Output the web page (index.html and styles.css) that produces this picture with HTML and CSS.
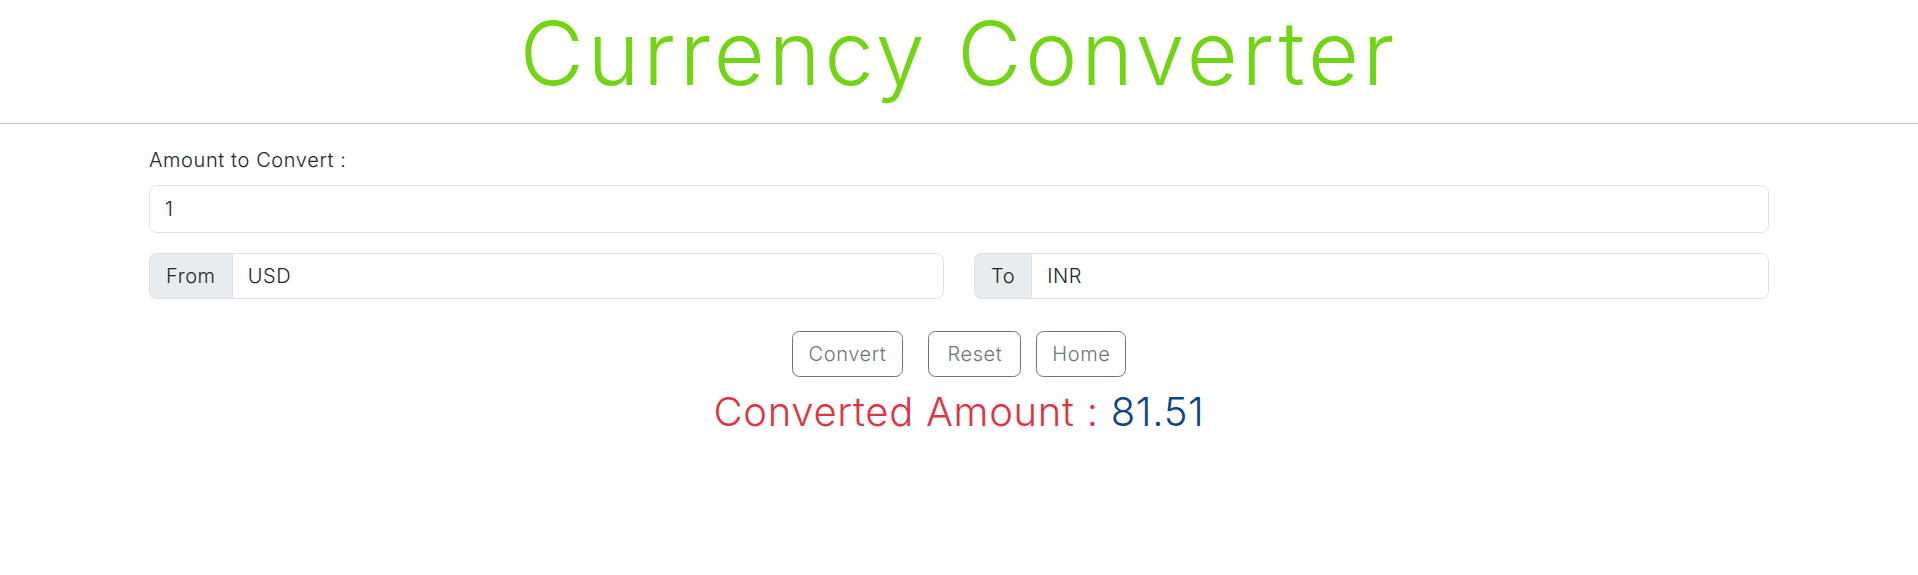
FILE: index.html
```html
<!DOCTYPE html>
<html lang="en">
<head>
<meta charset="utf-8">
<title>Currency Converter</title>
<link rel="stylesheet" href="styles.css">
</head>
<body>
<header class="header">
  <h1 class="title">Currency Converter</h1>
</header>
<hr class="divider">
<main class="container">
  <label class="label" for="amount">Amount to Convert :</label>
  <input class="field" id="amount" type="text" value="1">
  <div class="pair">
    <div class="group">
      <span class="addon">From</span>
      <input class="group-field" type="text" value="USD">
    </div>
    <div class="group">
      <span class="addon">To</span>
      <input class="group-field" type="text" value="INR">
    </div>
  </div>
  <div class="actions">
    <button class="btn btn-convert" type="button">Convert</button>
    <div class="btn-set">
      <button class="btn btn-reset" type="button">Reset</button>
      <button class="btn" type="button">Home</button>
    </div>
  </div>
  <h2 class="result">Converted Amount : <span class="value">81.51</span></h2>
</main>
</body>
</html>
```
FILE: styles.css
```css
* { box-sizing: border-box; }

html, body {
  margin: 0;
  padding: 0;
  background: #ffffff;
}

body {
  font-family: "Inter", "Lato", "DejaVu Sans", sans-serif;
  font-weight: 300;
  color: #212529;
  font-size: 20px;
  line-height: 30px;
  letter-spacing: 0.6px;
}

.header {
  height: 123px;
  display: flex;
  justify-content: center;
}

.title {
  margin: 0;
  font-size: 88px;
  line-height: normal;
  font-weight: 300;
  color: #71d414;
  letter-spacing: 3.9px;
}

.divider {
  margin: 0;
  border: 0;
  border-top: 1px solid #b9b9f3;
  height: 0;
}

.container {
  max-width: 1620px;
  margin: 0 auto;
  padding-top: 21px;
  display: flex;
  flex-direction: column;
}

.label {
  display: block;
  font-size: 20px;
  line-height: 30px;
  margin-bottom: 10px;
}

.field,
.group-field {
  font-family: inherit;
  font-weight: 300;
  font-size: 20px;
  line-height: 30px;
  letter-spacing: inherit;
  color: #212529;
  background: #fff;
  border: 1px solid #dee2e6;
  border-radius: 7.5px;
  padding: 7.5px 15px;
  height: 47.5px;
  width: 100%;
  outline: none;
}

.pair {
  margin-top: 20px;
  display: grid;
  grid-template-columns: 1fr 1fr;
  gap: 30px;
}

.group {
  display: flex;
  height: 46px;
}

.addon {
  display: flex;
  align-items: center;
  padding: 0 16px;
  background: #e9ecef;
  border: 1px solid #dee2e6;
  border-right: 0;
  border-radius: 7.5px 0 0 7.5px;
  color: #212529;
}

.group .group-field {
  height: 46px;
  border-radius: 0 7.5px 7.5px 0;
  flex: 1;
  min-width: 0;
}

.actions {
  margin-top: 32px;
  display: flex;
  justify-content: center;
  gap: 25px;
}

.btn-set {
  display: flex;
  gap: 15px;
}

.btn {
  font-family: inherit;
  font-weight: 300;
  font-size: 20px;
  line-height: 30px;
  letter-spacing: inherit;
  color: #6c757d;
  background: transparent;
  border: 1px solid #6c757d;
  border-radius: 7.5px;
  padding: 7.5px 15px;
  height: 46.5px;
  cursor: pointer;
}

.btn-convert {
  padding: 7.5px 16px;
}

.btn-reset {
  padding: 7.5px 18px;
}

.result {
  margin: 11px 0 0;
  text-align: center;
  font-size: 40px;
  line-height: 48px;
  font-weight: 300;
  letter-spacing: 0.7px;
  color: #dc3545;
}

.value {
  color: #0c4486;
}
```
